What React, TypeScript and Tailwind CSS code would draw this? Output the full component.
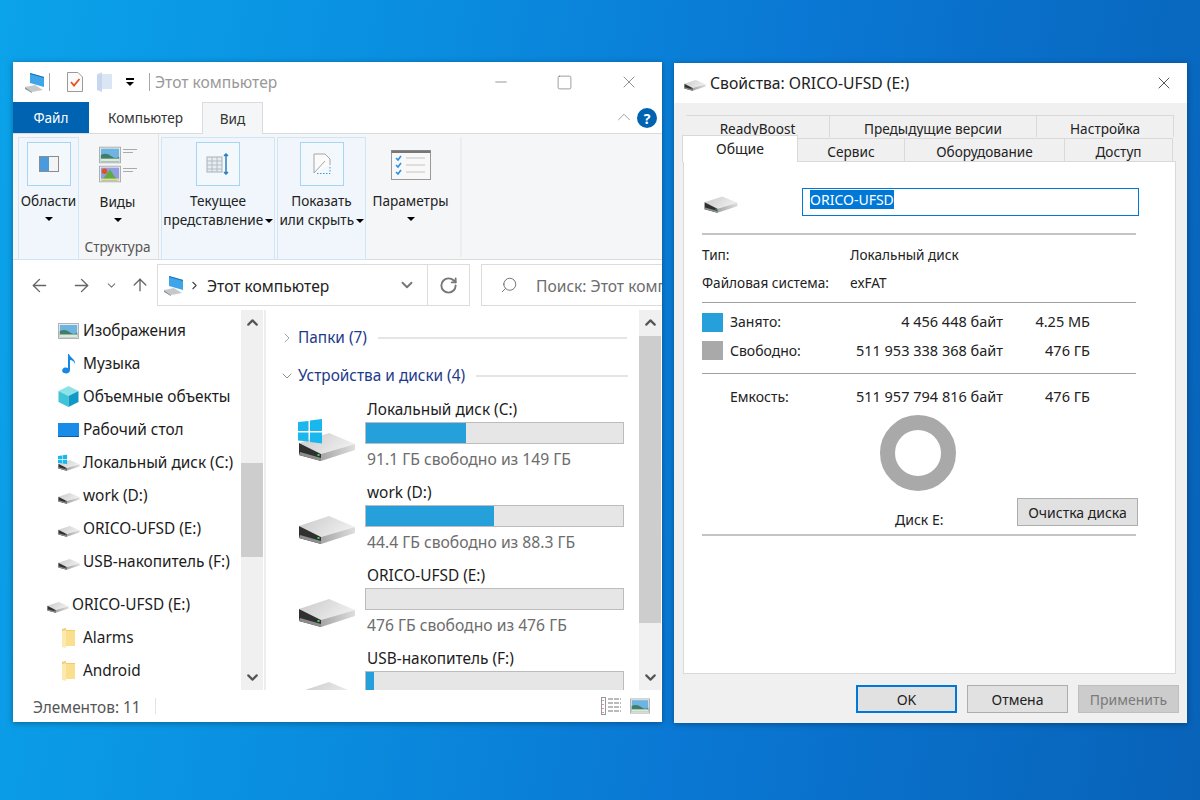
import React from "react";
import { ChevronDown, ChevronUp, ChevronRight, ArrowLeft, ArrowRight, ArrowUp, RotateCw, Search, X, Minus, Square } from "lucide-react";

let uid = 0;
function Drive({ w = 58, win = false, className = "" }: { w?: number; win?: boolean; className?: string }) {
  const id = React.useMemo(() => "d" + uid++, []);
  return (
    <svg width={w} height={(w * 45) / 58} viewBox="0 -15 58 45" className={className}>
      <defs>
        <linearGradient id={id} x1="0" y1="0" x2="1" y2="0.4">
          <stop offset="0" stopColor="#c9c9c9" />
          <stop offset="1" stopColor="#eeeeee" />
        </linearGradient>
        <linearGradient id={id + "s"} x1="0" y1="0" x2="1" y2="0">
          <stop offset="0" stopColor="#a5a5a5" />
          <stop offset="1" stopColor="#dedede" />
        </linearGradient>
      </defs>
      <polygon points="1,11 31,1 57,12 23,22" fill={`url(#${id})`} />
      <polygon points="23,22 57,12 57,18 23,29" fill={`url(#${id}s)`} />
      <polygon points="1,11 23,22 23,29 1,23" fill="#2f3030" />
      <polygon points="2,20 23,26 23,29 1,23" fill="#8d8d8d" />
      <rect x="19.5" y="22" width="2" height="2" fill="#3fd45a" />
      {win && (
        <g fill="#19b7ee">
          <polygon points="0,-10 10.5,-11 10.5,-1 0,-1" />
          <polygon points="12,-11.5 24,-13 24,-1 12,-1" />
          <polygon points="0,0.5 10.5,0.5 10.5,9.5 0,8.5" />
          <polygon points="12,0.5 24,0.5 24,11.5 12,10" />
        </g>
      )}
    </svg>
  );
}

function Caret({ className = "" }: { className?: string }) {
  return <span className={`inline-block w-0 h-0 border-l-[4px] border-r-[4px] border-t-[4px] border-l-transparent border-r-transparent border-t-black ${className}`} />;
}

function Landscape({ w = 24, h = 18 }: { w?: number; h?: number }) {
  return (
    <svg width={w} height={h} viewBox="0 0 24 18">
      <rect x="0.5" y="0.5" width="23" height="17" fill="#f4f4f4" stroke="#a8a8a8" />
      <rect x="2" y="2" width="20" height="14" fill="#6fb3e0" />
      <path d="M2 9 Q8 6 13 10 T22 11 V16 H2 Z" fill="#3f7f6a" />
      <rect x="2" y="13" width="20" height="3" fill="#dfe9d8" />
    </svg>
  );
}

function Scenery() {
  return (
    <svg width="22" height="18" viewBox="0 0 24 18">
      <rect x="0.5" y="0.5" width="23" height="17" fill="#f4f4f4" stroke="#a8a8a8" />
      <rect x="2" y="2" width="20" height="14" fill="#8f9fe0" />
      <circle cx="6" cy="6" r="3" fill="#e2521c" />
      <path d="M3 16 L12 4 L20 16 Z" fill="#5faa45" />
      <rect x="2" y="14" width="20" height="2" fill="#e6dc92" />
    </svg>
  );
}

function Computer({ w = 21 }: { w?: number }) {
  return (
    <svg width={w} height={w} viewBox="0 0 21 21">
      <polygon points="6,1 20,5 20,15 6,11" fill="#3ea6e8" />
      <polygon points="6,1 20,5 20,6 6,2" fill="#1a6fb5" />
      <polygon points="1,15 11,13 19,18 8,20" fill="#c6c9cc" />
      <polygon points="1,15 8,20 8,21 1,17" fill="#8f9498" />
    </svg>
  );
}

function Folder() {
  return (
    <svg width="15" height="20" viewBox="0 0 15 20">
      <polygon points="1,1 5,0 5,2 14,2 14,18 1,18" fill="#f3c969" />
      <polygon points="5,3 14,3 14,18 5,18" fill="#fadf8e" />
      <polygon points="1,3 5,2 5,20 1,19" fill="#fde9ae" />
    </svg>
  );
}

function NavRow({ icon, label, iconLeft = 41, textLeft = 83 }: { icon: React.ReactNode; label: string; iconLeft?: number; textLeft?: number }) {
  return (
    <div className="h-[33px] flex items-center relative text-[15.4px] text-[#1c1c1c] whitespace-nowrap">
      <div className="flex justify-center items-center" style={{ marginLeft: iconLeft, width: textLeft - 13 - iconLeft }}>{icon}</div>
      <span>{label}</span>
    </div>
  );
}

function DriveRow({ name, used, sub, win, clipped }: { name: string; used: number; sub: string; win?: boolean; clipped?: boolean }) {
  return (
    <div className="h-[83px] flex">
      <div className="w-[67px] ml-[32px] pt-[16px] shrink-0"><Drive win={win} /></div>
      <div className="w-[259px] mt-[-2px]">
        <div className="h-[23px] leading-[22px] text-[15.4px] text-[#1c1c1c] pl-[2px] whitespace-nowrap">{name}</div>
        <div className="h-[22px] border border-[#bcbcbc] bg-[#e6e6e6]">
          <div className="h-full bg-[#26a0da]" style={{ width: used }} />
        </div>
        {!clipped && <div className="h-[30px] leading-[30px] text-[15.7px] text-[#6d6d6d] pl-[2px] whitespace-nowrap">{sub}</div>}
      </div>
    </div>
  );
}

function Scroll({ thumbTop, thumbH }: { thumbTop: number; thumbH: number }) {
  return (
    <div className="w-[22px] bg-[#f0f0f0] flex flex-col items-center relative shrink-0">
      <ChevronUp size={17} strokeWidth={3} className="text-[#555] mt-[4px]" />
      <div className="absolute left-0 right-0 bg-[#cdcdcd]" style={{ top: thumbTop, height: thumbH }} />
      <ChevronDown size={17} strokeWidth={3} className="text-[#555] mt-auto mb-[4px]" />
    </div>
  );
}

function RibbonBtn({ children, width }: { children: React.ReactNode; width: number }) {
  return (
    <div className="h-[123px] mt-[3px] mr-[2px] bg-[#f0f6fb] border border-[#cfe6f8] flex flex-col items-center pt-[4px] text-[13.6px] text-[#222] leading-[19px] whitespace-nowrap" style={{ width }}>
      {children}
    </div>
  );
}

function IconBox({ children }: { children: React.ReactNode }) {
  return <div className="w-[44px] h-[44px] border border-[#a9d5f5] bg-[#f3f8fc] flex items-center justify-center mb-[5px]">{children}</div>;
}

function Tab({ w, label, h }: { w: number; label: string; h: number }) {
  return (
    <div className="bg-[#f0f0f0] border border-b-0 border-[#d9d9d9] -ml-[1px] overflow-hidden text-center text-[13.6px] text-[#222] pt-[3px] leading-[20px] whitespace-nowrap" style={{ width: w, height: h }}>
      {label}
    </div>
  );
}

function Info({ label, a, b }: { label: string; a: string; b: string }) {
  return (
    <div className="flex h-[29px] items-center text-[14px] text-[#222] whitespace-nowrap">
      <span className="w-[28px] shrink-0" />
      <span className="w-[115px] shrink-0">{label}</span>
      <span className="w-[158px] text-right shrink-0 text-[14.5px]">{a}</span>
      <span className="w-[87px] text-right shrink-0 text-[14.5px]">{b}</span>
    </div>
  );
}

export default function App() {
  return (
    <div className="relative w-[1200px] h-[800px] overflow-hidden font-['Noto_Sans',sans-serif] bg-[linear-gradient(100deg,#0ba3ea_0%,#0a8fe0_30%,#0a78d4_60%,#0862b8_100%)]">
      {/* Explorer */}
      <div className="absolute left-[13px] top-[62px] w-[649px] h-[660px] bg-white shadow-[0_1px_6px_rgba(0,0,0,0.35)] flex flex-col overflow-hidden">
        <div className="h-[40px] flex items-center shrink-0">
          <div className="ml-[11px]"><Computer /></div>
          <div className="w-px h-[18px] bg-[#a8a8a8] ml-[4px]" />
          <svg width="16" height="20" viewBox="0 0 16 20" className="ml-[17px]">
            <path d="M0.5 0.5 H11 L15.5 5 V19.5 H0.5 Z" fill="#fbfbfb" stroke="#9a9a9a" />
            <path d="M4 10 L7 13.5 L12.5 7" fill="none" stroke="#e8501e" strokeWidth="1.8" />
          </svg>
          <svg width="15" height="20" viewBox="0 0 15 20" className="ml-[14px]">
            <polygon points="0,2 5,0 5,2 15,2 15,17 0,17" fill="#dbe6f4" />
            <polygon points="0,3 5,1 5,20 0,18" fill="#c7d8ee" />
          </svg>
          <div className="ml-[14px] flex flex-col items-center gap-[2px]">
            <div className="w-[8px] h-[2px] bg-black" />
            <Caret />
          </div>
          <div className="w-px h-[18px] bg-[#a8a8a8] ml-[15px]" />
          <span className="ml-[5px] mt-[2px] text-[15.6px] text-[#999]">Этот компьютер</span>
          <Minus size={18} strokeWidth={1} className="ml-auto text-[#777]" />
          <Square size={17} strokeWidth={1} className="ml-[46px] text-[#777]" />
          <X size={20} strokeWidth={1} className="ml-[46px] mr-[23px] text-[#777]" />
        </div>
        <div className="h-[32px] flex shrink-0 border-b border-[#dadbdc] items-stretch text-[13.6px]">
          <div className="w-[76px] h-[31px] pt-[1px] bg-[#0063b1] text-white flex items-center justify-center">Файл</div>
          <div className="w-[113px] pt-[1px] flex items-center justify-center text-[#333]">Компьютер</div>
          <div className="w-[61px] h-[32px] pt-[1px] bg-[#f5f6f7] border border-b-0 border-[#dadbdc] flex items-center justify-center text-[#333]">Вид</div>
          <ChevronUp size={22} strokeWidth={1} className="ml-auto mr-[2px] mt-[4px] text-[#999]" />
          <div className="w-[20px] h-[20px] rounded-full bg-[#0063b1] text-white text-[14px] font-bold flex items-center justify-center mr-[5px] mt-[6px]">?</div>
        </div>
        <div className="h-[126px] flex shrink-0 bg-[#f5f6f7] border-b border-[#dadbdc] pl-[5px]">
          <RibbonBtn width={61}>
            <IconBox>
              <div className="w-[20px] h-[16px] border border-[#8c8c8c] flex">
                <div className="w-[9px] bg-[#4a9ade]" />
                <div className="flex-1 bg-[#f4f4f4]" />
              </div>
            </IconBox>
            <span>Области</span>
            <Caret className="mt-[7px]" />
          </RibbonBtn>
          <div className="w-[78px] pr-[4px] flex flex-col items-center relative text-[13.6px] text-[#222] leading-[19px] border-r border-[#e2e3e4]">
            <div className="flex flex-col gap-[1px] mt-[12px] w-[38px] mb-[9px]">
              <div className="flex gap-[2px]">
                <Landscape w={22} h={18} />
                <div className="flex flex-col gap-[2px] mt-[3px]">
                  <div className="w-[14px] h-px bg-[#aaa]" />
                  <div className="w-[10px] h-px bg-[#aaa]" />
                </div>
              </div>
              <div className="flex gap-[2px]">
                <Scenery />
                <div className="flex flex-col gap-[2px] mt-[3px]">
                  <div className="w-[14px] h-px bg-[#aaa]" />
                  <div className="w-[10px] h-px bg-[#aaa]" />
                </div>
              </div>
            </div>
            <span>Виды</span>
            <Caret className="mt-[7px]" />
            <span className="absolute top-[103px] text-[#555]">Структура</span>
          </div>
          <div className="w-[2px]" />
          <RibbonBtn width={114}>
            <IconBox>
              <svg width="24" height="22" viewBox="0 0 24 22">
                <rect x="1" y="4" width="15" height="15" fill="#e8edf1" stroke="#a7b0b8" />
                <path d="M1 8h15M1 12h15M1 16h15M6 4v15M11 4v15" stroke="#b4bcc4" strokeWidth="1" />
                <path d="M20 1v20M18 3l2-2 2 2M18 19l2 2 2-2" fill="none" stroke="#2d7ec0" strokeWidth="1.5" />
              </svg>
            </IconBox>
            <span>Текущее</span>
            <span>представление <Caret className="align-middle -ml-[2px]" /></span>
          </RibbonBtn>
          <RibbonBtn width={89}>
            <IconBox>
              <svg width="18" height="22" viewBox="0 0 18 22">
                <path d="M1 20 V1 H12 L17 6 V12" fill="#fbfbfb" stroke="#a5a5a5" />
                <path d="M1 20 L12 8" stroke="#a5a5a5" />
                <path d="M4 20.5 H17 V13" fill="none" stroke="#3b9be0" strokeDasharray="1.5 1.5" />
              </svg>
            </IconBox>
            <span>Показать</span>
            <span>или скрыть <Caret className="align-middle -ml-[2px]" /></span>
          </RibbonBtn>
          <div className="w-[94px] pr-[7px] flex flex-col items-center text-[13.6px] text-[#222] leading-[19px] border-r-2 border-[#eceded] mt-[3px] h-[120px]">
            <svg width="40" height="30" viewBox="0 0 40 30" className="mt-[13px] mb-[11px]">
              <rect x="0.5" y="0.5" width="39" height="29" fill="#f8f8f8" stroke="#999" />
              <rect x="0.5" y="0.5" width="39" height="2.5" fill="#777" />
              <path d="M5 8l2 2 3-4M5 15l2 2 3-4M5 22l2 2 3-4" fill="none" stroke="#2e90e0" strokeWidth="1.6" />
              <path d="M15 8h19M15 15h19M15 22h19" stroke="#c4c4c4" />
            </svg>
            <span>Параметры</span>
            <Caret className="mt-[7px]" />
          </div>
        </div>
        <div className="h-[50px] flex items-center shrink-0">
          <ArrowLeft size={21} strokeWidth={1.6} className="ml-[16px] text-[#666] shrink-0" />
          <ArrowRight size={21} strokeWidth={1.6} className="ml-[21px] text-[#666] shrink-0" />
          <ChevronDown size={13} strokeWidth={2} className="ml-[13px] text-[#777] shrink-0" />
          <ArrowUp size={20} strokeWidth={1.6} className="ml-[12px] text-[#666] shrink-0" />
          <div className="ml-[7px] w-[313px] h-[42px] border border-[#dcdcdc] flex items-center shrink-0">
            <div className="ml-[5px]"><Computer /></div>
            <ChevronRight size={13} strokeWidth={2} className="ml-[4px] text-[#444]" />
            <span className="ml-[6px] mt-[3px] text-[15.6px] text-[#222]">Этот компьютер</span>
            <ChevronDown size={18} strokeWidth={2.5} className="ml-auto mr-[11px] text-[#777]" />
            <div className="w-px h-full bg-[#dcdcdc]" />
            <RotateCw size={19} strokeWidth={2.4} className="mx-[11px] text-[#777]" />
          </div>
          <div className="ml-[11px] flex-1 h-[42px] border border-[#dcdcdc] border-r-0 flex items-center overflow-hidden">
            <Search size={18} strokeWidth={1.2} className="ml-[18px] text-[#666] -scale-x-100 shrink-0" />
            <span className="ml-[18px] mt-[3px] text-[15.6px] text-[#6d6d6d] whitespace-nowrap">Поиск: Этот компьютер</span>
          </div>
        </div>
        <div className="flex h-[380px] shrink-0">
          <div className="w-[228px] pt-[4px] shrink-0 overflow-hidden">
            <NavRow label="Изображения" icon={<Landscape w={21} h={16} />} />
            <NavRow label="Музыка" icon={
              <svg width="18" height="22" viewBox="0 0 18 22">
                <path d="M9 1 C10 5 16 6 15 11 C14 8 12 7 10 7 V17 C10 20 7 21 4 20 C1 19 2 15 5 14.5 C6.5 14.3 7.5 14.6 8 15 V1 Z" fill="#1687e6" />
              </svg>} />
            <NavRow label="Объемные объекты" icon={
              <svg width="21" height="21" viewBox="0 0 21 21">
                <polygon points="10.5,0 20.5,5 10.5,10 0.5,5" fill="#8be3e8" />
                <polygon points="0.5,5 10.5,10 10.5,21 0.5,16" fill="#3ec4d6" />
                <polygon points="20.5,5 10.5,10 10.5,21 20.5,16" fill="#1199c6" />
              </svg>} />
            <NavRow label="Рабочий стол" icon={
              <svg width="21" height="14" viewBox="0 0 21 14"><rect width="21" height="13" fill="#1a8be6" /><rect y="13" width="21" height="1" fill="#0b5fa8" /></svg>} />
            <NavRow label="Локальный диск (C:)" icon={<Drive w={22} win />} />
            <NavRow label="work (D:)" icon={<Drive w={22} />} />
            <NavRow label="ORICO-UFSD (E:)" icon={<Drive w={22} />} />
            <NavRow label="USB-накопитель (F:)" icon={<Drive w={22} />} />
            <div className="h-[10px]" />
            <NavRow label="ORICO-UFSD (E:)" iconLeft={31} textLeft={72} icon={<Drive w={22} />} />
            <NavRow label="Alarms" icon={<Folder />} />
            <NavRow label="Android" icon={<Folder />} />
          </div>
          <Scroll thumbTop={153} thumbH={94} />
          <div className="w-[2px] ml-[1px] bg-[#eeeeee] shrink-0" />
          <div className="w-[373px] overflow-hidden shrink-0">
            <div className="h-[50px] flex items-center text-[15.4px] text-[#1e3a8a] pt-[6px]">
              <ChevronRight size={16} strokeWidth={1} className="ml-[13px] text-[#777]" />
              <span className="ml-[3px]">Папки (7)</span>
              <div className="h-[2px] w-[249px] ml-[11px] bg-[#e5e5e5]" />
            </div>
            <div className="h-[29px] flex items-center text-[15.4px] text-[#1e3a8a] pt-[2px]">
              <ChevronDown size={16} strokeWidth={1} className="ml-[13px] text-[#555]" />
              <span className="ml-[3px] whitespace-nowrap">Устройства и диски (4)</span>
              <div className="h-[2px] flex-1 ml-[11px] mr-[11px] bg-[#e5e5e5]" />
            </div>
            <div className="h-[12px]" />
            <DriveRow name="Локальный диск (C:)" used={100} sub="91.1 ГБ свободно из 149 ГБ" win />
            <DriveRow name="work (D:)" used={128} sub="44.4 ГБ свободно из 88.3 ГБ" />
            <DriveRow name="ORICO-UFSD (E:)" used={0} sub="476 ГБ свободно из 476 ГБ" />
            <DriveRow name="USB-накопитель (F:)" used={8} sub="" clipped />
          </div>
          <Scroll thumbTop={26} thumbH={287} />
        </div>
        <div className="flex-1 flex items-center text-[15.4px] text-[#555] relative">
          <span className="ml-[20px] mt-[3px]">Элементов: 11</span>
          <div className="w-px h-[16px] bg-[#e5e5e5] ml-[14px]" />
          <svg width="20" height="18" viewBox="0 0 20 18" className="ml-auto">
            <rect x="0.5" y="0.5" width="4" height="17" fill="#fff" stroke="#999" />
            <path d="M2 3v1M2 7v1M2 11v1M2 15v1" stroke="#c33" />
            <path d="M7 2h13M7 6h13M7 10h13M7 14h13" stroke="#777" strokeDasharray="5 1" />
          </svg>
          <div className="ml-[9px] mr-[12px]"><Landscape w={20} h={16} /></div>
        </div>
      </div>

      {/* Properties */}
      <div className="absolute left-[674px] top-[63px] w-[513px] h-[660px] bg-[#f0f0f0] shadow-[0_1px_6px_rgba(0,0,0,0.35)] flex flex-col overflow-hidden">
        <div className="h-[40px] bg-white flex items-center shrink-0">
          <div className="ml-[10px]"><Drive w={22} /></div>
          <span className="ml-[4px] mt-[2px] text-[15.7px] text-[#222]">Свойства: ORICO-UFSD (E:)</span>
          <X size={20} strokeWidth={1} className="ml-auto mr-[13px] text-[#333]" />
        </div>
        <div className="relative h-[58px] shrink-0 pl-[12px]">
          <div className="flex pt-[12px] h-[34px] overflow-hidden">
            <Tab w={145} h={22} label="ReadyBoost" />
            <Tab w={208} h={22} label="Предыдущие версии" />
            <Tab w={138} h={22} label="Настройка" />
          </div>
          <div className="flex h-[23px] pl-[112px] mt-[1px] overflow-hidden">
            <Tab w={108} h={23} label="Сервис" />
            <Tab w={161} h={23} label="Оборудование" />
            <Tab w={109} h={23} label="Доступ" />
          </div>
          <div className="absolute left-[8px] top-[32px] w-[116px] h-[27px] bg-white border border-b-0 border-[#d9d9d9] z-10 flex justify-center text-[14px] text-[#222] pt-[2px]">Общие</div>
        </div>
        <div className="mx-[9px] w-[493px] h-[513px] bg-white border border-[#d9d9d9] shrink-0 px-[18px] pt-[26px] text-[14px] text-[#222]">
          <div className="flex h-[28px]">
            <Drive w={34} className="mt-[-1px] ml-[2px]" />
            <div className="ml-[64px] w-[337px] h-[28px] border border-[#0078d7] flex items-start pt-[1px] pl-[7px] text-[14px]">
              <span className="bg-[#0078d7] text-white leading-[19px]">ORICO-UFSD</span>
            </div>
          </div>
          <div className="w-[434px] h-[2px] bg-[#c4c4c4] mt-[17px]" />
          <div className="flex h-[28px] items-center mt-[6px] text-[13.6px]"><span className="w-[148px]">Тип:</span><span>Локальный диск</span></div>
          <div className="flex h-[28px] items-center text-[13.6px]"><span className="w-[148px] whitespace-nowrap">Файловая система:</span><span>exFAT</span></div>
          <div className="w-[434px] h-px bg-[#a0a0a0] mt-[5px] mb-[4px]" />
          <div className="relative">
            <div className="absolute left-0 top-[6px] w-[21px] h-[19px] bg-[#26a0da]" />
            <div className="absolute left-0 top-[34px] w-[21px] h-[19px] bg-[#a9a9a9]" />
            <Info label="Занято:" a="4 456 448 байт" b="4.25 МБ" />
            <Info label="Свободно:" a="511 953 338 368 байт" b="476 ГБ" />
          </div>
          <div className="w-[434px] h-px bg-[#a0a0a0] mt-[8px] mb-[8px]" />
          <Info label="Емкость:" a="511 957 794 816 байт" b="476 ГБ" />
          <div className="relative h-[123px]">
            <div className="absolute left-[178px] top-[4px] w-[76px] h-[76px] rounded-full border-[15px] border-[#a9a9a9]" />
            <span className="absolute left-[193px] top-[98px]">Диск Е:</span>
            <div className="absolute left-[315px] top-[87px] w-[121px] h-[28px] bg-[#e1e1e1] border border-[#adadad] flex items-center justify-center">Очистка диска</div>
          </div>
          <div className="w-[434px] h-[2px] bg-[#c4c4c4]" />
        </div>
        <div className="flex-1 flex pt-[11px] text-[14px] text-[#222]">
          <div className="ml-[182px] w-[101px] h-[28px] bg-[#e1e1e1] border-2 border-[#0078d7] flex items-center justify-center">OK</div>
          <div className="ml-[10px] w-[101px] h-[28px] bg-[#e1e1e1] border border-[#adadad] flex items-center justify-center">Отмена</div>
          <div className="ml-[10px] w-[101px] h-[28px] bg-[#cccccc] border border-[#bfbfbf] flex items-center justify-center text-[#7a7a7a]">Применить</div>
        </div>
      </div>
    </div>
  );
}
